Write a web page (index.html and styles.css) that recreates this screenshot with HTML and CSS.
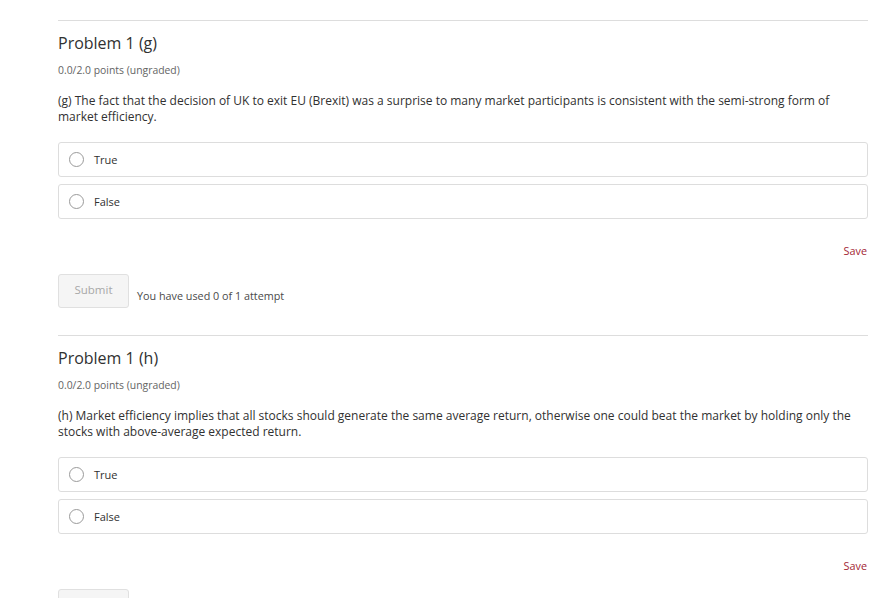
FILE: index.html
```html
<!DOCTYPE html>
<html>
<head>
<meta charset="utf-8">
<link rel="stylesheet" href="styles.css">
</head>
<body>
<div class="page">
  <section class="problem">
    <h3 class="title">Problem 1 (g)</h3>
    <div class="points">0.0/2.0 points (ungraded)</div>
    <p class="question">(g) The fact that the decision of UK to exit EU (Brexit) was a surprise to many market participants is consistent with the semi-strong form of market efficiency.</p>
    <div class="options">
      <label class="option"><span class="radio"></span><span class="label">True</span></label>
      <label class="option"><span class="radio"></span><span class="label">False</span></label>
    </div>
    <div class="save-row"><span class="save">Save</span></div>
    <div class="actions">
      <button class="submit">Submit</button>
      <span class="attempts">You have used 0 of 1 attempt</span>
    </div>
  </section>
  <section class="problem">
    <h3 class="title">Problem 1 (h)</h3>
    <div class="points">0.0/2.0 points (ungraded)</div>
    <p class="question">(h) Market efficiency implies that all stocks should generate the same average return, otherwise one could beat the market by holding only the stocks with above-average expected return.</p>
    <div class="options">
      <label class="option"><span class="radio"></span><span class="label">True</span></label>
      <label class="option"><span class="radio"></span><span class="label">False</span></label>
    </div>
    <div class="save-row"><span class="save">Save</span></div>
    <div class="actions">
      <button class="submit">Submit</button>
      <span class="attempts">You have used 0 of 1 attempt</span>
    </div>
  </section>
</div>
</body>
</html>
```

FILE: styles.css
```css
html, body {
  margin: 0;
  padding: 0;
  background: #fff;
}
body {
  font-family: "Open Sans", "Liberation Sans", sans-serif;
  color: #313131;
}
.page {
  padding: 20px 18px 0 58px;
  width: 810px;
}
.problem {
  border-top: 1px solid #dddddd;
  padding-top: 10px;
  padding-bottom: 27px;
}
.title {
  margin: 0;
  font-size: 16px;
  line-height: 24px;
  font-weight: 400;
  color: #313131;
}
.points {
  margin-top: 7px;
  font-size: 10.4px;
  line-height: 16px;
  color: #646464;
}
.question {
  margin: 15px 0 0 0;
  font-size: 12px;
  line-height: 16px;
  color: #313131;
}
.options {
  margin-top: 17px;
  display: flex;
  flex-direction: column;
  gap: 7px;
}
.option {
  display: flex;
  align-items: center;
  height: 33px;
  border: 1px solid #dddddd;
  border-radius: 3px;
  padding-left: 10px;
}
.radio {
  width: 13px;
  height: 13px;
  border: 1px solid #9a9a9a;
  border-radius: 50%;
  box-sizing: content-box;
}
.label {
  margin-left: 10px;
  font-size: 11px;
  color: #313131;
}
.save-row {
  margin-top: 24px;
  display: flex;
  justify-content: flex-end;
  padding-right: 1px;
}
.save {
  font-size: 10.8px;
  line-height: 16px;
  color: #a31f34;
}
.actions {
  margin-top: 15px;
  display: flex;
  align-items: flex-end;
  gap: 8px;
}
.submit {
  width: 71px;
  height: 34px;
  background: #f5f5f5;
  border: 1px solid #e0e0e0;
  border-radius: 3px;
  font-family: "Open Sans", "Liberation Sans", sans-serif;
  font-size: 11.5px;
  color: #a8a8a8;
  padding: 0 0 3px 0;
}
.attempts {
  font-size: 10.8px;
  line-height: 16px;
  color: #4a4a4a;
  padding-bottom: 4px;
}
```
